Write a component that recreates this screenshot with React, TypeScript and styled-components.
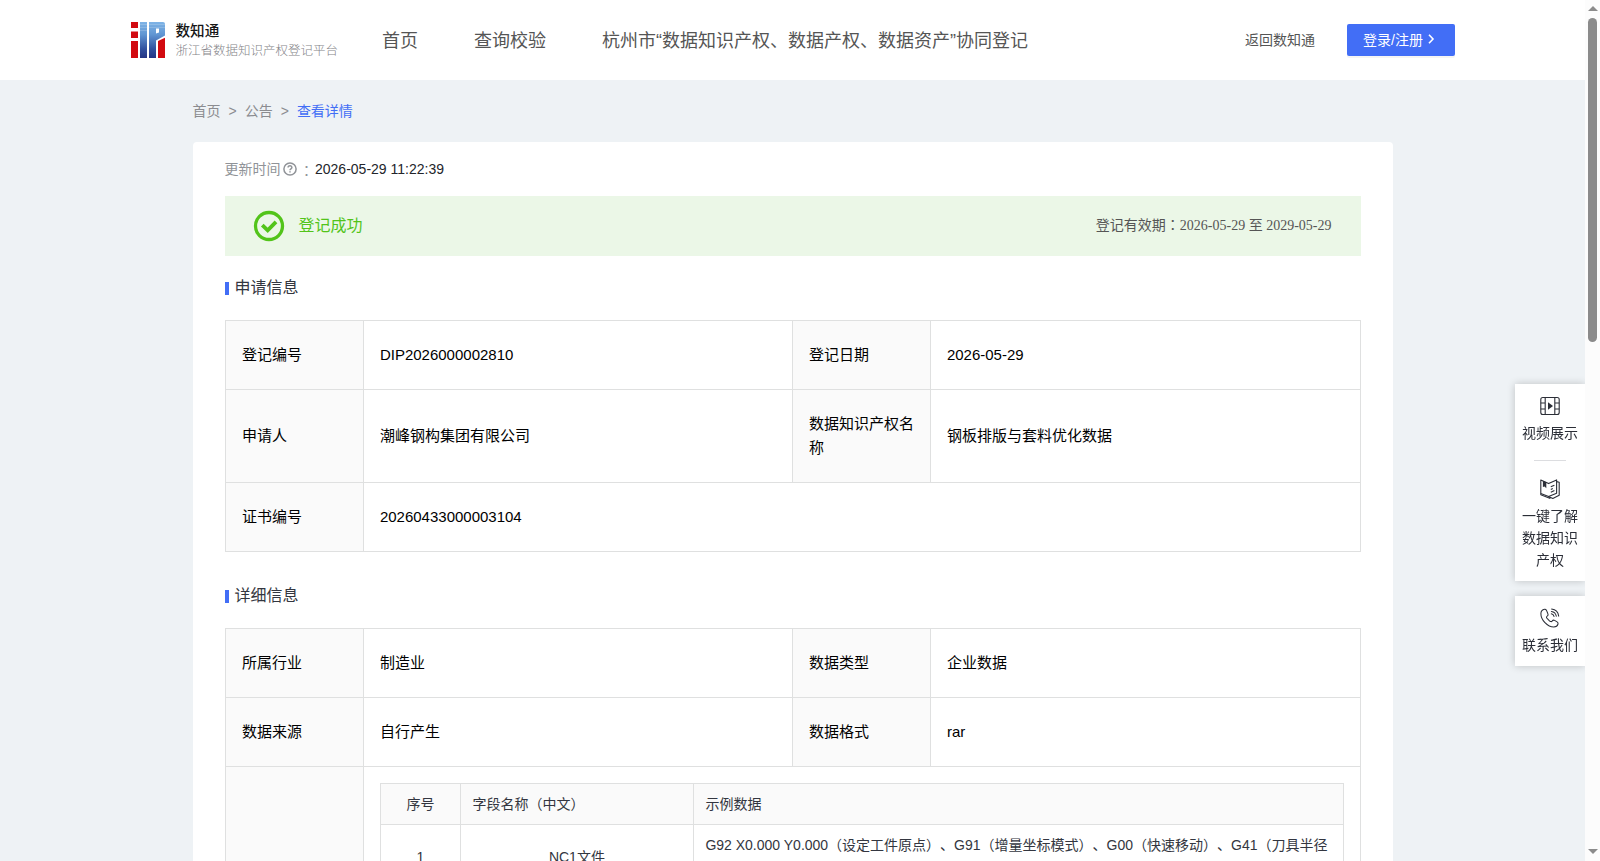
import React from "react";
import styled, { createGlobalStyle, css } from "styled-components";

const sans = `"Liberation Sans", "Noto Sans CJK SC", sans-serif`;
const serif = `"Liberation Serif", "Noto Sans CJK SC", serif`;
const blue = "#426ef6";
const line = "#dfe0e0";

const GlobalStyle = createGlobalStyle`
  * { box-sizing: border-box; }
  body {
    margin: 0;
    overflow: hidden;
    font-family: ${sans};
    font-size: 14px;
    color: #333640;
    text-spacing-trim: space-all;
  }
`;

const Frame = styled.div`
  display: flex;
  height: 861px;
  overflow: hidden;
`;

const Page = styled.div`
  flex: 1;
  min-width: 0;
  background: #eef2f5;
  overflow: hidden;
`;

const Header = styled.header`
  height: 80px;
  padding: 0 130px 0 131px;
  display: flex;
  align-items: center;
  background: #fff;
`;

const Brand = styled.div`
  display: flex;
  align-items: center;
  gap: 10.5px;
  width: 251px;
`;

const BrandText = styled.div`
  display: flex;
  flex-direction: column;
  white-space: nowrap;
`;

const BrandName = styled.span`
  font-size: 14.6px;
  line-height: 20px;
  font-weight: 500;
  color: #161616;
`;

const BrandSub = styled.span`
  padding-top: 1px;
  font-size: 12.5px;
  line-height: 18px;
  font-weight: 300;
  color: #838387;
`;

const Nav = styled.nav`
  display: flex;
  gap: 56px;
  padding-top: 1px;
  font-size: 18px;
  line-height: 26px;
  color: #555;
  white-space: nowrap;
`;

const Account = styled.div`
  display: flex;
  align-items: center;
  gap: 32px;
  margin-left: auto;
  color: #555;
`;

const BackLink = styled.span`
  padding-bottom: 2px;
`;

const LoginButton = styled.button`
  display: flex;
  align-items: center;
  gap: 3px;
  width: 108px;
  height: 32px;
  padding: 0 0 2px 16px;
  border: 0;
  border-radius: 2px;
  background: ${blue};
  box-shadow: 0 2px 0 rgba(0, 0, 0, 0.045);
  color: #fff;
  font: 14px ${sans};
`;

const Crumbs = styled.div`
  display: flex;
  gap: 8px;
  width: 1200px;
  margin: 0 auto;
  height: 62px;
  line-height: 62px;
  color: #8b8c90;
`;

const Current = styled.span`
  color: ${blue};
`;

const Card = styled.main`
  width: 1200px;
  height: 760px;
  margin: 0 auto;
  padding: 16px 32px 0;
  border-radius: 4px;
  background: #fff;
`;

const Updated = styled.div`
  display: flex;
  align-items: center;
  height: 22px;
  color: #909398;

  svg { margin: 0 1px 0 2px; }
  time { color: #23252b; }
`;

const UpdatedLabel = styled.span`
  padding-bottom: 2px;
`;

/* Full-width colon centred in its em box */
const Colon = styled.span`
  font-family: "Noto Sans CJK JP", sans-serif;
`;

const UpdatedColon = styled(Colon)`
  width: 16.5px;
  padding: 1px 0 0 1px;
`;

const Banner = styled.div`
  display: flex;
  align-items: center;
  justify-content: space-between;
  height: 60px;
  margin-top: 16px;
  padding: 0 29px 0 28px;
  background: #ebf7e7;
`;

const Status = styled.div`
  display: flex;
  align-items: center;
  gap: 14px;
  font-size: 16px;
  color: #52c41a;

  span { padding-bottom: 4px; }
`;

const Validity = styled.span`
  padding-bottom: 5px;
  font-family: ${serif};
  color: #555;
`;

const Heading = styled.h2<{ $top: number }>`
  display: flex;
  align-items: center;
  gap: 6px;
  height: 24px;
  margin: ${(p) => p.$top}px 0 20px;
  font-size: 16px;
  font-weight: 400;
  color: #333640;

  &::before {
    content: "";
    width: 4px;
    height: 13px;
    margin-top: 1px;
    background: ${blue};
  }

  span { padding-bottom: 4px; }
`;

const Info = styled.table`
  width: 1136px;
  table-layout: fixed;
  border-collapse: collapse;
  font-size: 15px;
  line-height: 24px;
  color: #000;
`;

const cell = css`
  border: 1px solid ${line};
  text-align: left;
  font-weight: 400;
`;

const Label = styled.th`
  ${cell}
  padding: 22px 14.5px 22px 16.4px;
  background: #fafafa;
`;

const Value = styled.td`
  ${cell}
  padding: 22px 14.5px 22px 16.4px;
`;

const NestedValue = styled.td`
  ${cell}
  padding: 16px 16px 30px 16.4px;
`;

const Fields = styled.table`
  width: 100%;
  table-layout: fixed;
  border-collapse: collapse;
  font-size: 14px;
  line-height: 23px;
  color: #333640;
`;

const FieldHead = styled.th<{ $center?: boolean }>`
  ${cell}
  height: 41px;
  padding: 0 11.5px;
  background: #fafafa;
  text-align: ${(p) => (p.$center ? "center" : "left")};
`;

const FieldCell = styled.td<{ $center?: boolean }>`
  ${cell}
  height: 66px;
  padding: 9px 11.5px;
  vertical-align: ${(p) => (p.$center ? "middle" : "top")};
  text-align: ${(p) => (p.$center ? "center" : "left")};
`;

const Dock = styled.aside`
  position: fixed;
  top: 384px;
  right: 15px;
  width: 70px;
  display: flex;
  flex-direction: column;
  gap: 15px;
  clip-path: inset(-20px 0 -20px -20px);
`;

const DockGroup = styled.div<{ $height: number }>`
  display: flex;
  flex-direction: column;
  align-items: center;
  height: ${(p) => p.$height}px;
  background: #fff;
  box-shadow: 0 0 8px rgba(0, 0, 0, 0.2);
`;

const DockItem = styled.div`
  display: flex;
  flex-direction: column;
  align-items: center;
  width: 56px;
  padding-top: 12px;
  text-align: center;
  line-height: 22px;
  color: #2b2e37;

  svg { margin-bottom: 6px; }
`;

const DockRule = styled.div`
  width: 32px;
  height: 1px;
  margin: 16px 0 6px;
  background: #dcdde0;
`;

const Scrollbar = styled.div`
  display: flex;
  flex-direction: column;
  align-items: center;
  width: 15px;
  padding: 6px 0 7px;
  background: #fcfcfc;
`;

const Arrow = styled.div<{ $down?: boolean }>`
  border: solid transparent;
  border-width: 0 5px 5px;
  border-bottom-color: #8b8b8b;
  ${(p) => p.$down && "transform: rotate(180deg); margin-top: auto;"}
`;

const Thumb = styled.div`
  width: 9px;
  height: 324px;
  margin-top: 7px;
  border-radius: 5px;
  background: #8b8b8b;
`;

const Logo = () => (
  <svg width="34" height="36" viewBox="0 0 34 36">
    <defs>
      <linearGradient id="logoBlue" x1="0" y1="0" x2="0" y2="36" gradientUnits="userSpaceOnUse">
        <stop offset="0" stopColor="#7fb4e6" />
        <stop offset=".35" stopColor="#6095d2" />
        <stop offset=".75" stopColor="#30509f" />
        <stop offset="1" stopColor="#243585" />
      </linearGradient>
    </defs>
    <g fill="#d20a10">
      <path d="M0 0h7v6H0zM0 9.500h7v6.500H0zM0 19h7v17H0zM27 19l7-3.200v20.200h-7z" />
    </g>
    <path d="M9 0h7v36H9zM18 0h14q2 0 2 2v11.500l-9 5v17.500h-7zM25 6.500v5l3-1v-4z" fill="url(#logoBlue)" fillRule="evenodd" />
    <path d="M9 2.5h25M9 5.5h25M9 8.5h9" stroke="#fff" strokeWidth=".5" opacity=".35" />
  </svg>
);

const Help = () => (
  <svg width="15" height="14" viewBox="0 0 15 14" fill="none" stroke="#909398" strokeWidth="1.5">
    <circle cx="7" cy="7" r="6.100" />
    <path d="M5.100 5.600c0-2.600 3.900-2.400 3.800 0 0 1.400-1.900 1.300-1.900 2.700M7 9.300v1.300" />
  </svg>
);

const Success = () => (
  <svg width="32" height="32" viewBox="0 0 32 32" fill="none" stroke="#52c41a">
    <circle cx="16" cy="16" r="13.5" strokeWidth="3.300" />
    <path d="M9.300 15.100l5.400 5.200 8.300-8.400" strokeWidth="3.800" />
  </svg>
);

const Chevron = () => (
  <svg width="10" height="12" viewBox="0 0 10 12" fill="none" stroke="#fff" strokeWidth="1.6">
    <path d="M3 1.800l4 4.200-4 4.200" />
  </svg>
);

const Film = () => (
  <svg width="20" height="20" viewBox="0 0 20 20" fill="none" stroke="#2b2e37" strokeWidth="1.1">
    <rect x=".8" y="1.5" width="18.4" height="17" rx="2" />
    <path d="M5.200 1.500v17M14.800 1.500v17M.8 7H5M.8 13H5M15 7h4.200M15 13h4.200" />
    <path d="M8 6.200l5 3.800-5 3.800z" fill="#2b2e37" stroke="none" />
  </svg>
);

const Book = () => (
  <svg width="20" height="20" viewBox="0 0 20 20" fill="none" stroke="#2b2e37" strokeWidth="1.1" strokeLinejoin="round">
    <path d="M.8 1v13.500l7.800 3 8-3.200V.9L8.600 4.600z" />
    <path d="M16.600 2.600l2.600.6v13.100l-6.400 3.100-4.200-2M.8 14.500v1.300l9.500 3.600" />
    <path d="M10.800 7.800l3.600-1.600M10.800 13.200l3.600-1.600M10.800 10.500l2-.9" />
    <path d="M2.900 1.800l3.400 1.500v6L4.600 7.400 2.900 8z" fill="#2b2e37" stroke="none" />
  </svg>
);

const Phone = () => (
  <svg width="20" height="20" viewBox="0 0 20 20" fill="none" stroke="#2b2e37" strokeWidth="1.05" strokeLinecap="round" strokeLinejoin="round">
    <path d="M4.600 1.300C2.600 1.600 1 3.300.9 5.400.7 11.800 7.600 18.900 13.800 18.900c2 0 3.700-1.100 4.200-2.800.3-1-.1-1.700-.9-2.200l-2.500-1.500c-.9-.5-1.700-.3-2.300.5-.9 1.100-1.800.8-2.800-.1L7.100 10.400c-.8-.9-.8-1.600.1-2.300 1-.7 1.200-1.500.7-2.400L6.500 2.400c-.4-.8-1-1.200-1.900-1.100z" />
    <path d="M11.600 1.100c3.800.5 6.600 3.200 7.100 7M11.400 3.500c2.700.4 4.400 2.100 4.900 4.700M11.300 5.800c1.500.3 2.400 1.200 2.700 2.600" />
  </svg>
);

const columns = (
  <colgroup>
    <col style={{ width: 138 }} />
    <col style={{ width: 429 }} />
    <col style={{ width: 138 }} />
    <col />
  </colgroup>
);

type Pair = [string, string];

const InfoRow = ({ pairs }: { pairs: Pair[] }) => (
  <tr>
    {pairs.map(([label, value]) => (
      <React.Fragment key={label}>
        <Label>{label}</Label>
        <Value colSpan={pairs.length === 1 ? 3 : 1}>{value}</Value>
      </React.Fragment>
    ))}
  </tr>
);

export default function App() {
  return (
    <Frame>
      <GlobalStyle />
      <Page>
        <Header>
          <Brand>
            <Logo />
            <BrandText>
              <BrandName>数知通</BrandName>
              <BrandSub>浙江省数据知识产权登记平台</BrandSub>
            </BrandText>
          </Brand>
          <Nav>
            <span>首页</span>
            <span>查询校验</span>
            <span>杭州市“数据知识产权、数据产权、数据资产”协同登记</span>
          </Nav>
          <Account>
            <BackLink>返回数知通</BackLink>
            <LoginButton>
              登录/注册
              <Chevron />
            </LoginButton>
          </Account>
        </Header>
        <Crumbs>
          <span>首页</span>
          <span>&gt;</span>
          <span>公告</span>
          <span>&gt;</span>
          <Current>查看详情</Current>
        </Crumbs>
        <Card>
          <Updated>
            <UpdatedLabel>更新时间</UpdatedLabel>
            <Help />
            <UpdatedColon>：</UpdatedColon>
            <time>2026-05-29 11:22:39</time>
          </Updated>
          <Banner>
            <Status>
              <Success />
              <span>登记成功</span>
            </Status>
            <Validity>
              登记有效期<Colon>：</Colon>2026-05-29 至 2029-05-29
            </Validity>
          </Banner>
          <Heading $top={20}>
            <span>申请信息</span>
          </Heading>
          <Info>
            {columns}
            <tbody>
              <InfoRow pairs={[["登记编号", "DIP2026000002810"], ["登记日期", "2026-05-29"]]} />
              <InfoRow pairs={[["申请人", "潮峰钢构集团有限公司"], ["数据知识产权名称", "钢板排版与套料优化数据"]]} />
              <InfoRow pairs={[["证书编号", "20260433000003104"]]} />
            </tbody>
          </Info>
          <Heading $top={32}>
            <span>详细信息</span>
          </Heading>
          <Info>
            {columns}
            <tbody>
              <InfoRow pairs={[["所属行业", "制造业"], ["数据类型", "企业数据"]]} />
              <InfoRow pairs={[["数据来源", "自行产生"], ["数据格式", "rar"]]} />
              <tr>
                <Label />
                <NestedValue colSpan={3}>
                  <Fields>
                    <colgroup>
                      <col style={{ width: 80 }} />
                      <col style={{ width: 233 }} />
                      <col />
                    </colgroup>
                    <tbody>
                      <tr>
                        <FieldHead $center>序号</FieldHead>
                        <FieldHead>字段名称（中文）</FieldHead>
                        <FieldHead>示例数据</FieldHead>
                      </tr>
                      <tr>
                        <FieldCell $center>1</FieldCell>
                        <FieldCell $center>NC1文件</FieldCell>
                        <FieldCell>
                          G92 X0.000 Y0.000（设定工件原点）、G91（增量坐标模式）、G00（快速移动）、G41（刀具半径
                        </FieldCell>
                      </tr>
                    </tbody>
                  </Fields>
                </NestedValue>
              </tr>
            </tbody>
          </Info>
        </Card>
      </Page>
      <Scrollbar>
        <Arrow />
        <Thumb />
        <Arrow $down />
      </Scrollbar>
      <Dock>
        <DockGroup $height={197}>
          <DockItem>
            <Film />
            视频展示
          </DockItem>
          <DockRule />
          <DockItem>
            <Book />
            一键了解数据知识产权
          </DockItem>
        </DockGroup>
        <DockGroup $height={70}>
          <DockItem>
            <Phone />
            联系我们
          </DockItem>
        </DockGroup>
      </Dock>
    </Frame>
  );
}
